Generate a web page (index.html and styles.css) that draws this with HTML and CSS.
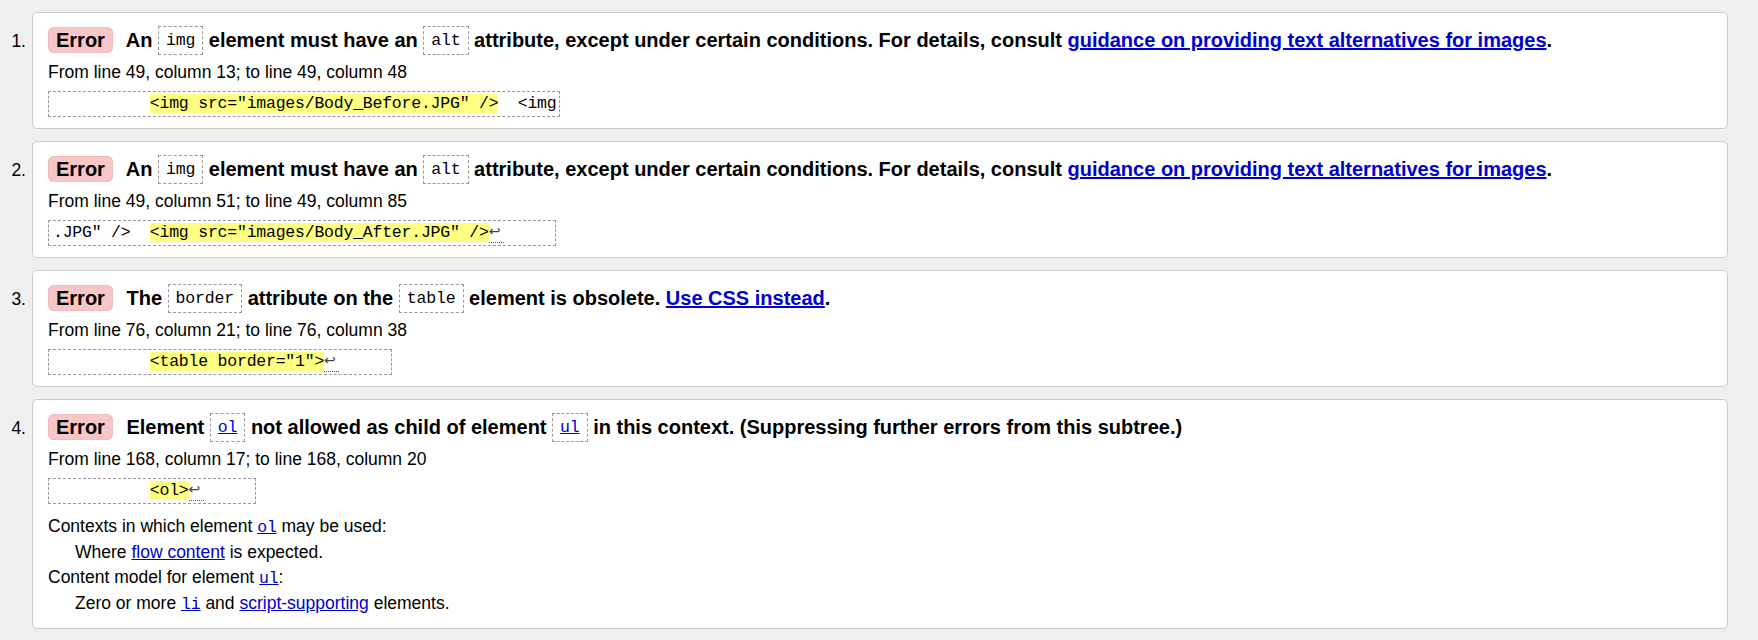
FILE: index.html
```html
<!DOCTYPE html>
<html lang="en">
<head>
<meta charset="utf-8">
<title>Validation results</title>
<link rel="stylesheet" href="styles.css">
</head>
<body>
<ol class="messages">
<li class="msg">
<span class="num">1.</span>
<div class="card">
<p class="title"><strong class="badge">Error</strong> An <code class="c">img</code> element must have an <code class="c">alt</code> attribute, except under certain conditions. For details, consult <a href="#">guidance on providing text alternatives for images</a>.</p>
<p class="loc">From line 49, column 13; to line 49, column 48</p>
<div class="extract"><code>          <b>&lt;img src="images/Body_Before.JPG" /&gt;</b>  &lt;img</code></div>
</div>
</li>
<li class="msg">
<span class="num">2.</span>
<div class="card">
<p class="title"><strong class="badge">Error</strong> An <code class="c">img</code> element must have an <code class="c">alt</code> attribute, except under certain conditions. For details, consult <a href="#">guidance on providing text alternatives for images</a>.</p>
<p class="loc">From line 49, column 51; to line 49, column 85</p>
<div class="extract"><code>.JPG" /&gt;  <b>&lt;img src="images/Body_After.JPG" /&gt;</b><span class="lf">↩</span>     </code></div>
</div>
</li>
<li class="msg">
<span class="num">3.</span>
<div class="card">
<p class="title"><strong class="badge">Error</strong> The <code class="c">border</code> attribute on the <code class="c">table</code> element is obsolete. <a href="#">Use CSS instead</a>.</p>
<p class="loc">From line 76, column 21; to line 76, column 38</p>
<div class="extract"><code>          <b>&lt;table border="1"&gt;</b><span class="lf">↩</span>     </code></div>
</div>
</li>
<li class="msg">
<span class="num">4.</span>
<div class="card">
<p class="title"><strong class="badge">Error</strong> Element <code class="c"><a href="#">ol</a></code> not allowed as child of element <code class="c"><a href="#">ul</a></code> in this context. (Suppressing further errors from this subtree.)</p>
<p class="loc">From line 168, column 17; to line 168, column 20</p>
<div class="extract"><code>          <b>&lt;ol&gt;</b><span class="lf">↩</span>     </code></div>
<dl class="defs">
<dt>Contexts in which element <a href="#"><code class="m">ol</code></a> may be used:</dt>
<dd>Where <a href="#">flow content</a> is expected.</dd>
<dt>Content model for element <a href="#"><code class="m">ul</code></a>:</dt>
<dd>Zero or more <a href="#"><code class="m">li</code></a> and <a href="#">script-supporting</a> elements.</dd>
</dl>
</div>
</li>
</ol>
</body>
</html>
```

FILE: styles.css
```css
* { box-sizing: border-box; }
html, body { margin: 0; padding: 0; }
body {
  background: #efefef;
  font-family: "Liberation Sans", Arial, sans-serif;
  font-size: 17.5px;
  color: #000;
}
a { color: #0000cc; }
.messages {
  list-style: none;
  margin: 0;
  padding: 12px 30px 14px 0;
  display: flex;
  flex-direction: column;
  gap: 12px;
}
.msg { display: flex; align-items: baseline; }
.num {
  flex: none;
  width: 32px;
  padding-right: 6px;
  text-align: right;
}
.card {
  flex: 1;
  min-width: 0;
  background: #fff;
  border: 1px solid #cbcbcb;
  border-radius: 5px;
  padding: 12px 15px 11px;
}
.title {
  margin: 0;
  font-size: 20px;
  font-weight: bold;
  line-height: 30px;
  white-space: nowrap;
}
.badge {
  display: inline-block;
  padding: 2px 8px;
  line-height: 22px;
  border-radius: 6px;
  background: #f7c6c6;
  box-shadow: inset 0 0 0 1px #f0bcbc;
  margin-right: 8px;
}
.c {
  display: inline-block;
  font-family: "Liberation Mono", monospace;
  font-size: 16.5px;
  letter-spacing: -0.15px;
  font-weight: normal;
  line-height: 21px;
  padding: 3px 7px;
  border: 1px dashed #999;
  vertical-align: 2px;
}
.loc { margin: 5px 0 0; line-height: 25px; }
.extract { display: flex; margin-top: 6px; }
.extract code {
  font-family: "Liberation Mono", monospace;
  font-size: 16.5px;
  letter-spacing: -0.22px;
  line-height: 20px;
  padding: 2px 3px 2px 4px;
  border: 1px dashed #999;
  white-space: pre;
}
.extract b { font-weight: normal; background: #ffff80; }
.lf {
  display: inline-block;
  width: 15px;
  height: 20px;
  font-family: "DejaVu Sans", sans-serif;
  font-size: 14px;
  line-height: 16px;
  letter-spacing: 0;
  vertical-align: top;
  color: #444;
  border-bottom: 1px dotted #555;
}
.defs { margin: 10px 0 0; line-height: 25px; }
.defs dt { margin: 0; }
.defs dd { margin: 0 0 0 27px; }
.m { font-family: "Liberation Mono", monospace; font-size: 16.5px; letter-spacing: -0.15px; }
```
